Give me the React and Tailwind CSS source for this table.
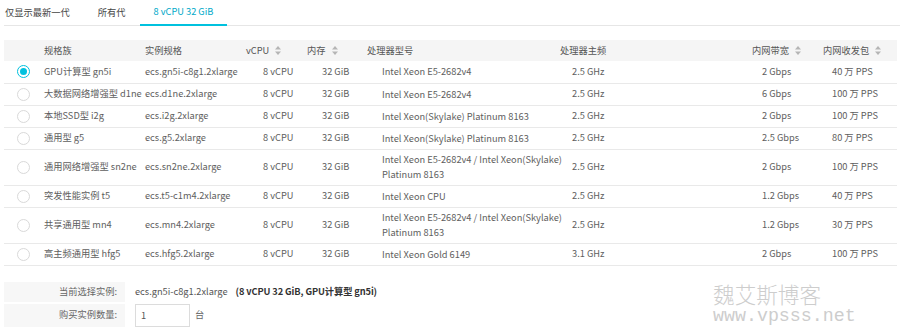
import { useState } from "react";

const rows = [
  { family: "GPU计算型 gn5i", spec: "ecs.gn5i-c8g1.2xlarge", cpu: ["Intel Xeon E5-2682v4"], freq: "2.5 GHz", bw: "2 Gbps", pps: "40 万 PPS" },
  { family: "大数据网络增强型 d1ne", spec: "ecs.d1ne.2xlarge", cpu: ["Intel Xeon E5-2682v4"], freq: "2.5 GHz", bw: "6 Gbps", pps: "100 万 PPS" },
  { family: "本地SSD型 i2g", spec: "ecs.i2g.2xlarge", cpu: ["Intel Xeon(Skylake) Platinum 8163"], freq: "2.5 GHz", bw: "2 Gbps", pps: "100 万 PPS" },
  { family: "通用型 g5", spec: "ecs.g5.2xlarge", cpu: ["Intel Xeon(Skylake) Platinum 8163"], freq: "2.5 GHz", bw: "2.5 Gbps", pps: "80 万 PPS" },
  { family: "通用网络增强型 sn2ne", spec: "ecs.sn2ne.2xlarge", cpu: ["Intel Xeon E5-2682v4 / Intel Xeon(Skylake)", "Platinum 8163"], freq: "2.5 GHz", bw: "2 Gbps", pps: "100 万 PPS" },
  { family: "突发性能实例 t5", spec: "ecs.t5-c1m4.2xlarge", cpu: ["Intel Xeon CPU"], freq: "2.5 GHz", bw: "1.2 Gbps", pps: "40 万 PPS" },
  { family: "共享通用型 mn4", spec: "ecs.mn4.2xlarge", cpu: ["Intel Xeon E5-2682v4 / Intel Xeon(Skylake)", "Platinum 8163"], freq: "2.5 GHz", bw: "1.2 Gbps", pps: "30 万 PPS" },
  { family: "高主频通用型 hfg5", spec: "ecs.hfg5.2xlarge", cpu: ["Intel Xeon Gold 6149"], freq: "3.1 GHz", bw: "2 Gbps", pps: "100 万 PPS" },
];

function SortIcon() {
  return (
    <svg width="6" height="9" viewBox="0 0 6 9" className="ml-[6px] inline-block align-[-1px]">
      <path d="M3 0 L6 3.5 H0 Z" fill="#b5b5b5" />
      <path d="M3 9 L6 5.5 H0 Z" fill="#b5b5b5" />
    </svg>
  );
}

function Radio({ checked }) {
  return (
    <span
      className={
        checked
          ? "flex h-[13px] w-[13px] items-center justify-center rounded-full border border-[#00c1de] bg-white"
          : "flex h-[13px] w-[13px] items-center justify-center rounded-full border border-[#d9d9d9] bg-white"
      }
    >
      {checked && <span className="h-[7px] w-[7px] rounded-full bg-[#00c1de]" />}
    </span>
  );
}

export default function App() {
  const [selected, setSelected] = useState(0);
  const tabs = ["仅显示最新一代", "所有代", "8 vCPU 32 GiB"];

  return (
    <div
      className="h-[335px] w-[900px] overflow-hidden bg-white pl-[4px] text-[9.25px] text-[#5e5e5e]"
      style={{ fontFamily: '"Noto Sans CJK SC", "Noto Sans", sans-serif' }}
    >
      {/* Tabs */}
      <div className="flex h-[26px] border-b border-[#e6e6e6]">
        {tabs.map((t, i) => (
          <div
            key={t}
            className={
              i === 2
                ? "-mb-px flex items-center border-b-2 border-[#00c1de] px-[14px] text-[#00a9c9]"
                : i === 0
                  ? "flex items-center pl-[1px] pr-[14px] text-[#444]"
                  : "flex items-center px-[14px] text-[#444]"
            }
          >
            {t}
          </div>
        ))}
      </div>

      {/* Table */}
      <table className="mt-[14px] w-[893px] table-fixed border-collapse">
        <colgroup>
          <col className="w-[36px]" />
          <col className="w-[102px]" />
          <col className="w-[101px]" />
          <col className="w-[61px]" />
          <col className="w-[60px]" />
          <col className="w-[193px]" />
          <col className="w-[192px]" />
          <col className="w-[71px]" />
          <col className="w-[77px]" />
        </colgroup>
        <thead>
          <tr className="h-[21px] bg-[#f5f5f5] text-left text-[#555]">
            <th />
            <th className="pl-[4px] font-normal">规格族</th>
            <th className="pl-[3px] font-normal">实例规格</th>
            <th className="pl-[3px] font-normal">vCPU<SortIcon /></th>
            <th className="pl-[3px] font-normal">内存<SortIcon /></th>
            <th className="pl-[3px] font-normal">处理器型号</th>
            <th className="pl-[3px] font-normal">处理器主频</th>
            <th className="pl-[3px] font-normal">内网带宽<SortIcon /></th>
            <th className="pl-[3px] font-normal">内网收发包<SortIcon /></th>
          </tr>
        </thead>
        <tbody>
          {rows.map((r, i) => (
            <tr
              key={r.spec}
              onClick={() => setSelected(i)}
              className={
                r.cpu.length > 1
                  ? "h-[36px] cursor-pointer border-b border-[#e9e9e9]"
                  : "h-[22px] cursor-pointer border-b border-[#e9e9e9]"
              }
            >
              <td className="pl-[13px]">
                <Radio checked={selected === i} />
              </td>
              <td className="whitespace-nowrap pl-[4px]">{r.family}</td>
              <td className="whitespace-nowrap pl-[3px]">{r.spec}</td>
              <td className="pl-[20px]">8 vCPU</td>
              <td className="pl-[18px]">32 GiB</td>
              <td className="pl-[18px] leading-[15px]">
                {r.cpu.map((l) => (
                  <div key={l} className="whitespace-nowrap">{l}</div>
                ))}
              </td>
              <td className="pl-[15px]">{r.freq}</td>
              <td className="pl-[13px]">{r.bw}</td>
              <td className="whitespace-nowrap pl-[12px]">{r.pps}</td>
            </tr>
          ))}
        </tbody>
      </table>

      {/* Bottom form + watermark */}
      <div className="mt-[16px] flex">
        <div className="flex flex-col gap-[2px]">
          <div className="flex h-[20px] items-center">
            <div className="flex h-full w-[121px] items-center justify-end bg-[#f7f7f7] pr-[8px] text-[#666]">
              当前选择实例:
            </div>
            <span className="ml-[10px] text-[#555]">ecs.gn5i-c8g1.2xlarge</span>
            <span className="ml-[8px] font-bold tracking-[-0.1px] text-[#333]">(8 vCPU 32 GiB, GPU计算型 gn5i)</span>
          </div>
          <div className="flex h-[23px] items-center">
            <div className="flex h-full w-[121px] items-center justify-end bg-[#f7f7f7] pr-[8px] text-[#666]">
              购买实例数量:
            </div>
            <input
              defaultValue="1"
              className="ml-[10px] h-[23px] w-[55px] border border-[#dcdcdc] pl-[5px] text-[9.25px] text-[#555] outline-none"
            />
            <span className="ml-[5px] text-[#666]">台</span>
          </div>
        </div>
        <div className="ml-[336px] mt-[1px] flex flex-col leading-none text-[#cdcdcd]">
          <span className="text-[21.6px] font-light" style={{ fontFamily: '"Noto Sans CJK SC", serif' }}>
            魏艾斯博客
          </span>
          <span className="mt-[3px] text-[18.3px]" style={{ fontFamily: '"Liberation Mono", monospace' }}>
            www.vpsss.net
          </span>
        </div>
      </div>
    </div>
  );
}
